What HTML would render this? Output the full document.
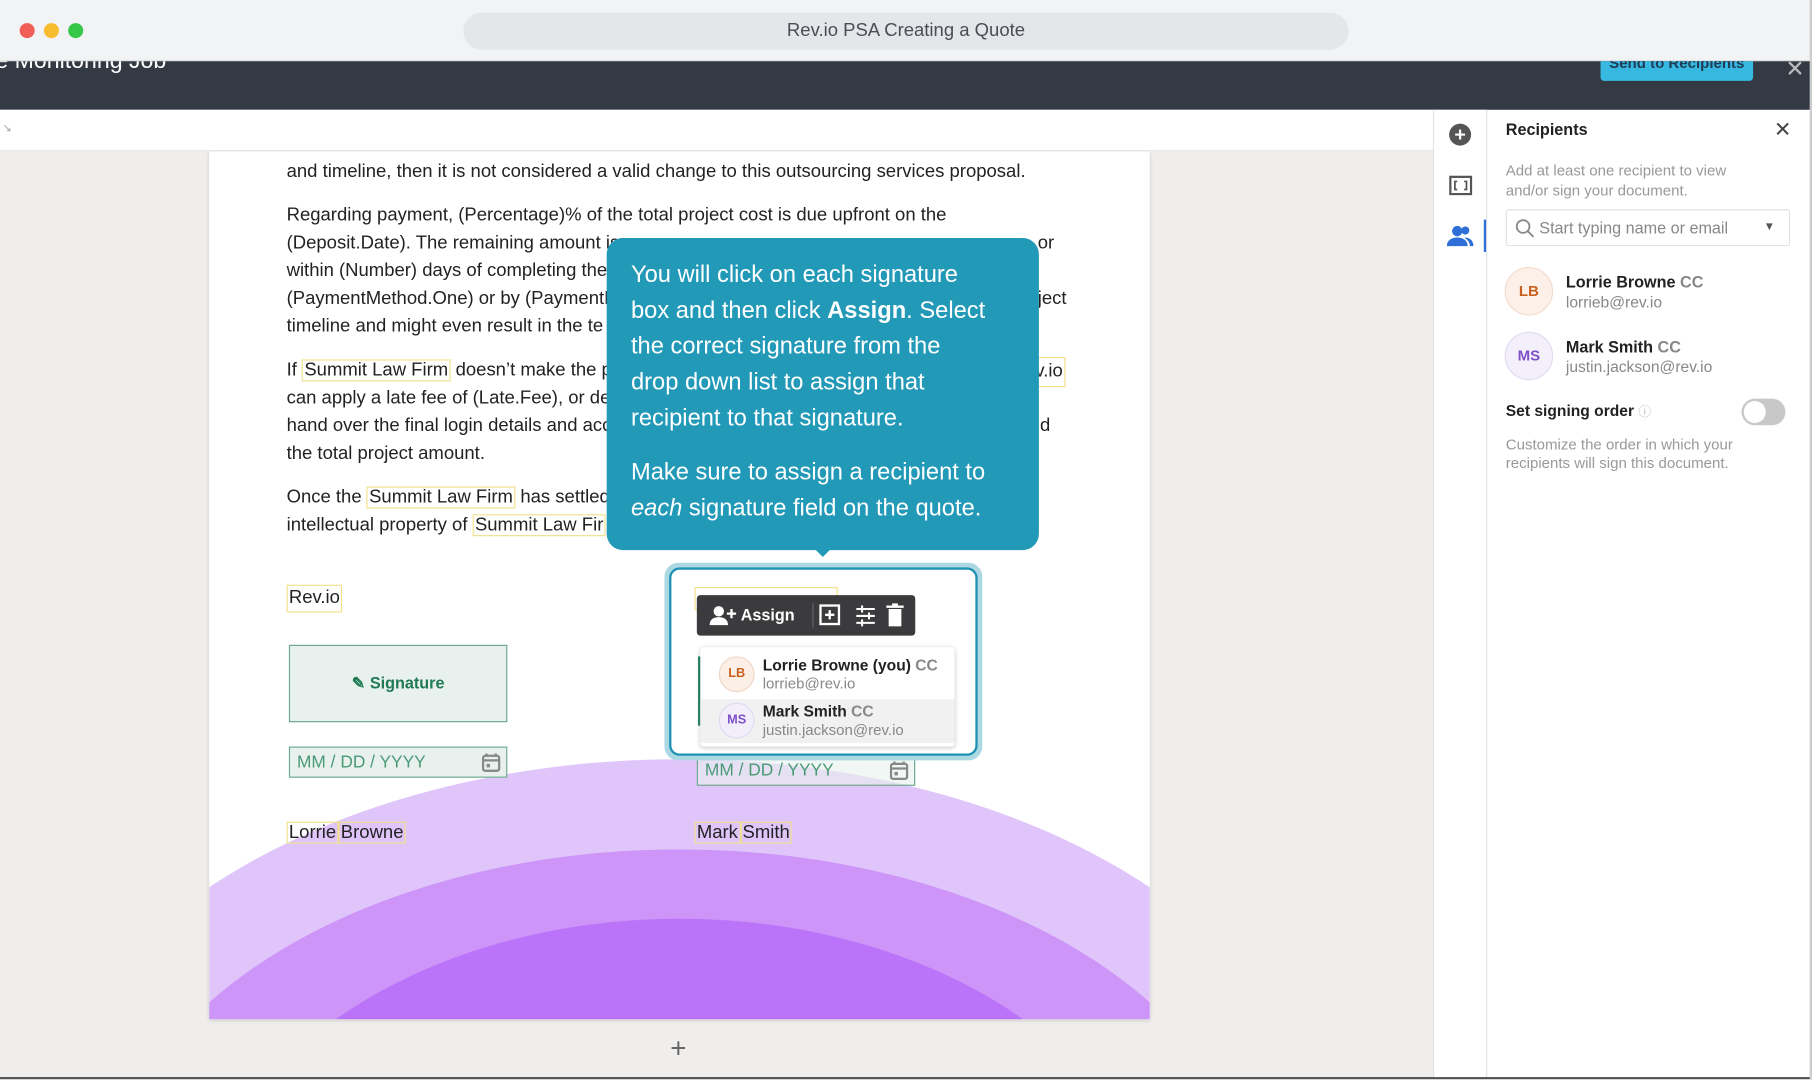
<!DOCTYPE html>
<html><head><meta charset="utf-8"><style>
*{box-sizing:border-box;margin:0;padding:0}
html,body{width:1812px;height:1080px;overflow:hidden;background:#fff;font-family:"Liberation Sans",sans-serif}
#w{position:absolute;left:0;top:0;width:1568px;height:934px;transform:scale(1.15561);transform-origin:0 0;overflow:hidden;background:#fff}
.a{position:absolute}
.doc{font-size:16px;color:#222;line-height:24px}
.hl{border:1.5px solid #f1e18a;padding:0 1px}
.tt{color:#fff;font-size:20.5px;line-height:31px;white-space:nowrap}
</style></head><body><div id="w">
<div class="a" style="left:0;top:0;width:1568px;height:53px;background:#f2f3f5;border-bottom:1px solid #ddd"></div>
<div class="a" style="left:17px;top:20px;width:13px;height:13px;border-radius:50%;background:#f05f57"></div>
<div class="a" style="left:38px;top:20px;width:13px;height:13px;border-radius:50%;background:#f7bd2e"></div>
<div class="a" style="left:59px;top:20px;width:13px;height:13px;border-radius:50%;background:#35c748"></div>
<div class="a" style="left:401px;top:11px;width:766px;height:32px;border-radius:16px;background:#e4e6ea;text-align:center;line-height:32px;font-size:16px;color:#4a4d55">Rev.io PSA Creating a Quote</div>
<div class="a" style="left:0;top:53px;width:1568px;height:42px;background:#333a44;overflow:hidden">
 <div class="a" style="left:-4px;top:-11px;color:#fff;font-size:20px">e Monitoring Job</div>
 <div class="a" style="left:1385px;top:-12px;width:132px;height:29px;background:#36b8e0;border-radius:3px;color:#1f3b55;font-size:13px;font-weight:bold;text-align:center;line-height:28px">Send to Recipients</div>
 <div class="a" style="left:1545px;top:-6px;color:#bbb;font-size:20px">✕</div>
</div>
<div class="a" style="left:0;top:95px;width:1240px;height:36px;background:#fff;border-bottom:1px solid #e4e4e4"></div>
<div class="a" style="left:2px;top:106px;color:#aaa;font-size:10px">↘</div>
<div class="a" style="left:0;top:131px;width:1240px;height:802px;background:#efeeec"></div>
<div class="a" style="left:181px;top:131px;width:814px;height:751px;background:#fff;overflow:hidden;box-shadow:0 1px 3px rgba(0,0,0,.15)">
 <svg class="a" style="left:0;top:0" width="814" height="751">
  <ellipse cx="407" cy="880" rx="560" ry="354" fill="#e0c5fb"/>
  <ellipse cx="407" cy="920" rx="500" ry="316" fill="#cd95f7"/>
  <ellipse cx="407" cy="960" rx="420" ry="296" fill="#bb74f9"/>
 </svg>
</div>
<div class="a doc" style="left:248px;top:137px">and timeline, then it is not considered a valid change to this outsourcing services proposal.</div>
<div class="a doc" style="left:248px;top:175px;width:690px">Regarding payment, (Percentage)% of the total project cost is due upfront on the<br>(Deposit.Date). The remaining amount is<span style="position:absolute;left:650px">or</span><br>within (Number) days of completing the<br>(PaymentMethod.One) or by (PaymentM<span style="position:absolute;left:650px">ject</span><br>timeline and might even result in the te</div>
<div class="a doc" style="left:248px;top:309px;width:690px">If <span class="hl">Summit Law Firm</span> doesn’t make the p<span style="position:absolute;left:646px" class="hl">v.io</span><br>can apply a late fee of (Late.Fee), or de<br>hand over the final login details and acc<span style="position:absolute;left:652px">d</span><br>the total project amount.</div>
<div class="a doc" style="left:248px;top:419px">Once the <span class="hl">Summit Law Firm</span> has settled<br>intellectual property of <span class="hl">Summit Law Fir</span></div>
<div class="a doc hl" style="left:248px;top:506px;line-height:22px">Rev.io</div>
<div class="a" style="left:250px;top:558px;width:189px;height:67px;background:#e8f1ed;border:1.5px solid #6aa88c;color:#1f7a55;font-weight:bold;font-size:14px;text-align:center;line-height:64px">✎ Signature</div>
<div class="a" style="left:250px;top:646px;width:189px;height:27px;background:#e8f1ed;border:1.5px solid #6aa88c;color:#4a9a78;font-size:15px;line-height:26px;padding-left:6px">MM / DD / YYYY<svg style="position:absolute;right:5px;top:4px" width="16" height="17" fill="none" stroke="#888" stroke-width="2"><rect x="1" y="3" width="14" height="13" rx="2"/><path d="M4 1v3M12 1v3M1 7h14"/><rect x="4" y="10" width="3" height="3" fill="#888" stroke="none"/></svg></div>
<div class="a doc" style="left:248px;top:710px;line-height:22px"><span class="hl">Lorrie</span><span class="hl">Browne</span></div>
<div class="a doc" style="left:601px;top:710px;line-height:22px"><span class="hl">Mark</span><span class="hl">Smith</span></div>
<div class="a" style="left:603px;top:653px;width:189px;height:27px;background:rgba(232,241,237,.6);border:1.5px solid #6aa88c;color:#4a9a78;font-size:15px;line-height:26px;padding-left:6px">MM / DD / YYYY<svg style="position:absolute;right:5px;top:4px" width="16" height="17" fill="none" stroke="#888" stroke-width="2"><rect x="1" y="3" width="14" height="13" rx="2"/><path d="M4 1v3M12 1v3M1 7h14"/><rect x="4" y="10" width="3" height="3" fill="#888" stroke="none"/></svg></div>
<div class="a" style="left:575px;top:487px;width:275px;height:171px;border:5px solid #acd8e4;border-radius:12px"></div>
<div class="a" style="left:579px;top:491px;width:267px;height:163px;border:2.5px solid #1f91b2;border-radius:9px;background:#fff"></div>
<div class="a hl" style="left:601px;top:508px;width:124px;height:20px"></div>
<div class="a" style="left:604px;top:568px;width:3px;height:60px;background:#2f8a66"></div>
<div class="a" style="left:603px;top:515px;width:189px;height:35px;background:#3b3b3d;border-radius:3px;color:#fff;font-weight:bold;font-size:14px;line-height:35px">
 <svg class="a" style="left:11px;top:9px" width="24" height="18" fill="#fff"><circle cx="8" cy="5" r="4.5"/><path d="M0 17c0-5 3.5-7 8-7s8 2 8 7z"/><path d="M19 3v8M15 7h8" stroke="#fff" stroke-width="2"/></svg>
 <span style="position:absolute;left:38px">Assign</span>
 <div class="a" style="left:100px;top:7px;width:1px;height:21px;background:#666"></div>
 <svg class="a" style="left:104px;top:7px" width="80" height="22" fill="none" stroke="#fff" stroke-width="2"><rect x="3" y="2" width="16" height="16"/><path d="M11 6v8M7 10h8"/><path d="M34 5h16M34 11h16M34 17h16M39 2v6M45 8v6M39 14v6" stroke-width="1.8"/><rect x="62" y="5" width="11" height="15" fill="#fff" stroke="none"/><path d="M60 3h15M65 1h5"/></svg>
</div>
<div class="a" style="left:606px;top:560px;width:220px;height:86px;background:#fff;box-shadow:0 1px 4px rgba(0,0,0,.2);border-radius:3px"></div>
<div class="a" style="left:606px;top:605px;width:220px;height:38px;background:#f1f1f1"></div>
<div class="a" style="left:622px;top:568px;width:31px;height:31px;border-radius:50%;background:#fbefe6;border:1px solid #f1d6c4;color:#c8611f;font-size:11px;font-weight:bold;text-align:center;line-height:29px">LB</div>
<div class="a" style="left:660px;top:568px;font-size:13.5px;font-weight:bold;color:#222;line-height:16px">Lorrie Browne (you) <span style="color:#888">CC</span><br><span style="font-weight:normal;color:#888;font-size:13px">lorrieb@rev.io</span></div>
<div class="a" style="left:622px;top:608px;width:31px;height:31px;border-radius:50%;background:#f2effb;border:1px solid #e0daf2;color:#7d50c8;font-size:11px;font-weight:bold;text-align:center;line-height:29px">MS</div>
<div class="a" style="left:660px;top:608px;font-size:13.5px;font-weight:bold;color:#222;line-height:16px">Mark Smith <span style="color:#888">CC</span><br><span style="font-weight:normal;color:#888;font-size:13px">justin.jackson@rev.io</span></div>
<div class="a" style="left:525px;top:206px;width:374px;height:270px;background:#2399b8;border-radius:14px;padding:16px 0 0 21px">
 <div class="tt">You will click on each signature<br>box and then click <b>Assign</b>. Select<br>the correct signature from the<br>drop down list to assign that<br>recipient to that signature.</div>
 <div class="tt" style="margin-top:16px">Make sure to assign a recipient to<br><i>each</i> signature field on the quote.</div>
</div>
<div class="a" style="left:704px;top:474px;width:0;height:0;border-left:8px solid transparent;border-right:8px solid transparent;border-top:8px solid #2399b8"></div>
<div class="a" style="left:580px;top:894px;color:#666;font-size:24px;line-height:28px">+</div>
<div class="a" style="left:1240px;top:95px;width:47px;height:838px;background:#fff;border-left:1px solid #e2e2e2;border-right:1px solid #e2e2e2"></div>
<div class="a" style="left:1254px;top:107px;width:19px;height:19px;border-radius:50%;background:#555;color:#fff;font-size:17px;font-weight:bold;text-align:center;line-height:19px">+</div>
<svg class="a" style="left:1254px;top:152px" width="20" height="17" fill="none" stroke="#555" stroke-width="2"><rect x="1" y="1" width="18" height="15"/><path d="M7 5H5v7h2M13 5h2v7h-2" stroke-width="1.5"/></svg>
<svg class="a" style="left:1252px;top:194px" width="24" height="20" fill="#2f6fd8"><circle cx="9" cy="6" r="4.5"/><path d="M0 19c0-5 4-7.5 9-7.5s9 2.5 9 7.5z"/><circle cx="16" cy="5.5" r="3.5"/><path d="M15 11.5c5 0 8 2.5 8 7.5h-3c0-3-2-5.5-5-7.5z"/></svg>
<div class="a" style="left:1284px;top:190px;width:2px;height:28px;background:#2f6fd8"></div>
<div class="a" style="left:1303px;top:104px;font-size:14px;font-weight:bold;color:#222">Recipients</div>
<div class="a" style="left:1535px;top:102px;font-size:18px;color:#444">✕</div>
<div class="a" style="left:1303px;top:139px;font-size:13px;color:#999;line-height:17px">Add at least one recipient to view<br>and/or sign your document.</div>
<div class="a" style="left:1303px;top:181px;width:246px;height:32px;border:1px solid #e2e2e2;border-radius:2px;font-size:14px;color:#888;line-height:30px;padding-left:28px">Start typing name or email<svg style="position:absolute;left:7px;top:7px" width="17" height="17" fill="none" stroke="#888" stroke-width="1.6"><circle cx="7" cy="7" r="5.5"/><path d="M11 11l5 5"/></svg><span style="position:absolute;right:12px;top:0;font-size:10px;color:#555">▼</span></div>
<div class="a" style="left:1302px;top:231px;width:42px;height:42px;border-radius:50%;background:#fcf0e8;border:1px solid #f3dccd;color:#c8611f;font-size:13px;font-weight:bold;text-align:center;line-height:40px">LB</div>
<div class="a" style="left:1355px;top:236px;font-size:14px;font-weight:bold;color:#222;line-height:17px">Lorrie Browne <span style="color:#888">CC</span><br><span style="font-weight:normal;color:#888;font-size:13.5px">lorrieb@rev.io</span></div>
<div class="a" style="left:1302px;top:287px;width:42px;height:42px;border-radius:50%;background:#f3f0fb;border:1px solid #e1dcf0;color:#7d50c8;font-size:13px;font-weight:bold;text-align:center;line-height:40px">MS</div>
<div class="a" style="left:1355px;top:292px;font-size:14px;font-weight:bold;color:#222;line-height:17px">Mark Smith <span style="color:#888">CC</span><br><span style="font-weight:normal;color:#888;font-size:13.5px">justin.jackson@rev.io</span></div>
<div class="a" style="left:1303px;top:348px;font-size:13.5px;font-weight:bold;color:#222">Set signing order <span style="font-weight:normal;color:#bbb;font-size:11px">ⓘ</span></div>
<div class="a" style="left:1507px;top:345px;width:38px;height:23px;border-radius:12px;background:#c8c8c8"><div class="a" style="left:2px;top:2px;width:19px;height:19px;border-radius:50%;background:#fff"></div></div>
<div class="a" style="left:1303px;top:377px;font-size:13px;color:#999;line-height:16px">Customize the order in which your<br>recipients will sign this document.</div>
<div class="a" style="left:0;top:932px;width:1568px;height:2px;background:#555"></div>
<div class="a" style="left:1566px;top:0;width:2px;height:934px;background:#ccc"></div>
</div></body></html>
